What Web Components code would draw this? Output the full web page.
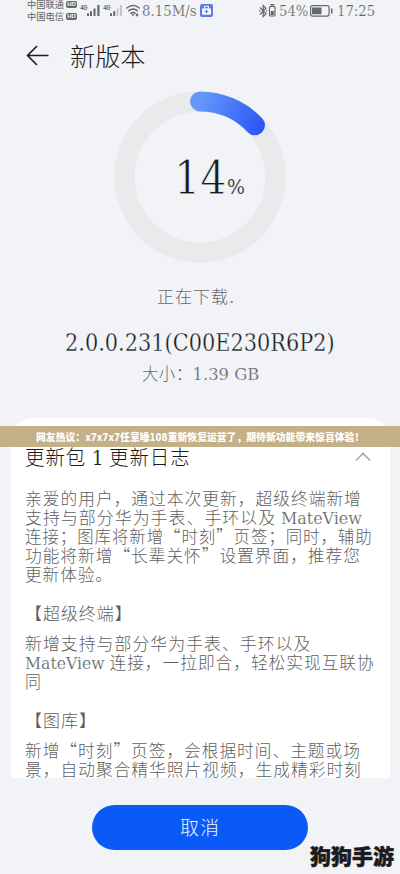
<!DOCTYPE html>
<html lang="zh-CN">
<head>
<meta charset="utf-8">
<title>新版本</title>
<style>
html,body{margin:0;padding:0;background:#f2f3f6}
body{width:400px;height:874px;overflow:hidden;font-family:"Noto Sans CJK SC",sans-serif;font-weight:300;color:#191a1c}
</style>
</head>
<body>
<update-page></update-page>
<script>
const define = (name, html, ready) => {
  const t = document.createElement('template');
  t.innerHTML = html;
  customElements.define(name, class extends HTMLElement {
    connectedCallback() {
      if (this.shadowRoot) return;
      this.attachShadow({mode: 'open'}).append(t.content.cloneNode(true));
      if (ready) ready.call(this);
    }
  });
};

// Latin letters and digits in a slab face, thinned by an outline in the surface colour.
define('latin-text', `<style>
:host{display:inline;font-family:"DejaVu Serif",serif;font-size:var(--latin,1em);line-height:0;letter-spacing:0;-webkit-text-stroke:var(--thin,.2px) var(--surface,#f2f3f6)}
</style><slot></slot>`);

// One line of text, set to the width given in "w".
// Measured once all nested elements have their own styles.
define('fit-line', `<style>
:host{display:block;flex:none;white-space:pre}
span{display:inline-block;transform-origin:0 50%}
</style><span><slot></slot></span>`, function () {
  const w = +this.getAttribute('w');
  const s = this.shadowRoot.querySelector('span');
  this.style.width = w + 'px';
  queueMicrotask(() => {
    s.style.transform = `scaleX(${w / s.offsetWidth})`;
  });
});

define('status-bar', `<style>
:host{display:flex;height:24px;color:#626366;align-items:flex-start;box-sizing:border-box;padding-left:27px}
.ops{display:grid;grid-template-rows:12px 12px;font-size:9.5px;font-weight:400;line-height:12px;margin-top:-2px;width:51px}
.row{display:flex;align-items:center;gap:2px}
.hd{font:700 6px/7px "Liberation Sans",sans-serif;background:#66676a;color:#f2f3f6;border-radius:2px;width:11px;height:7px;text-align:center}
svg{display:block;flex:none}
.speed,.num{font-size:15px;line-height:20px;height:22px}
</style>
<div class="ops"><div class="row"><fit-line w="37">中国联通</fit-line><span class="hd">HD</span></div><div class="row"><fit-line w="37">中国电信</fit-line><span class="hd">HD</span></div></div>
<svg width="64" height="22" viewBox="78 0 64 22">
<g fill="#66676a"><path d="M87 13.3h2V16h-2zM90 11.2h2V16h-2zM93.5 8.5h2V16h-2zM97.300 5h2.200v11h-2.200z"/><path d="M110 13.300h2V16h-2z"/><path d="M113.200 11.200h2V16h-2z"/><path fill="#c4c5c8" d="M116.500 8.500h2V16h-2zM119.900 5h2.200v11h-2.200z"/></g>
<g font-family="Liberation Sans" font-weight="700" font-size="6.500" fill="#66676a"><text x="80.300" y="9.800">4</text><text x="83.500" y="9.800" textLength="4" lengthAdjust="spacingAndGlyphs">G</text><text x="103.300" y="9.800">4</text><text x="106.500" y="9.800" textLength="4" lengthAdjust="spacingAndGlyphs">G</text></g>
<g fill="none" stroke="#66676a" stroke-width="1.500" stroke-linecap="round"><path d="M126.800 8q6.300-5 12.500 0M128.800 10.700q4.300-3.400 8.500 0M130.900 13.300q2.100-1.600 4.200 0"/></g><path fill="#66676a" d="M131.500 14.200h3L133 16.500zM135.500 15l1.500-2 1.500 2-1.500 1.800z"/>
</svg>
<fit-line class="speed" w="55"><latin-text>8.15M/s</latin-text></fit-line>
<svg width="17" height="22" viewBox="197 0 17 22"><rect x="200" y="4" width="13" height="13" rx="2" fill="#5a7bea"/><rect x="202" y="8.300" width="9" height="6.500" rx="1.300" fill="#f7f9ff"/><path d="M204.500 8V6.300h4V8" fill="none" stroke="#f7f9ff"/><path d="M206.500 9.700v3.600M204.700 11.500h3.600" stroke="#5a7bea" stroke-width="1.100"/></svg>
<svg style="margin-left:44px" width="21" height="22" viewBox="258 0 21 22"><g fill="none" stroke="#66676a" stroke-width="1.200"><path d="M260 7.500l6 6.300-2.800 2.700v-11l2.800 2.700-6 6.300"/><rect x="269.500" y="6.500" width="5.500" height="9.500" rx="1"/></g><path fill="#66676a" d="M270.300 4h4v1.500h-4zM270.800 11h3v4h-3zM259 10.300h1.300v1.300H259zM266 10.300h1.300v1.300H266z"/></svg>
<fit-line class="num" w="29"><latin-text>54%</latin-text></fit-line>
<svg width="29" height="22" viewBox="308 0 29 22"><rect x="310.600" y="5.600" width="18.500" height="10.500" rx="2" fill="none" stroke="#66676a" stroke-width="1.200"/><path fill="#66676a" d="M312 7.500h9.500v6.700H312zM331 8.500h1.500v5H331z"/></svg>
<fit-line class="num" w="38"><latin-text>17:25</latin-text></fit-line>`);

define('page-header', `<style>
:host{display:flex;align-items:center;height:36px;padding:14px 0 0 26px}
svg{display:block}
fit-line{font-size:24.500px;line-height:36px;margin-left:20px}
</style><svg width="24" height="24" viewBox="0 0 24 24"><path d="M22.500 11.500H1.500M11 2L1.500 11.500L11 21" fill="none" stroke="#191a1c" stroke-width="1.600"/></svg><fit-line w="76"><slot></slot></fit-line>`);

define('progress-ring', `<style>
:host{display:grid;width:172px;height:172px;margin:17px auto 0}
svg,.v{grid-area:1/1}
.v{display:flex;align-items:baseline;margin:55px 0 0 60px}
.n{font-size:46px;line-height:56px;--thin:.9px}.p{font-size:20px;--thin:.2px}
</style><svg width="172" height="172" viewBox="0 0 172 172"><defs><linearGradient id="g" gradientUnits="userSpaceOnUse" x1="76" y1="10" x2="148" y2="44"><stop offset=".1" stop-color="#6698fb"/><stop offset="1" stop-color="#2853f5"/></linearGradient></defs><circle cx="86" cy="86" r="75.500" fill="none" stroke="#e9eaec" stroke-width="20.500"/><path d="M86 10.500A75.500 75.500 0 0 1 141 34.300" fill="none" stroke="url(#g)" stroke-width="20" stroke-linecap="round"/></svg>
<div class="v"><fit-line class="n" w="53"><latin-text>14</latin-text></fit-line><fit-line class="p" w="18"><latin-text>%</latin-text></fit-line></div>`);

define('download-info', `<style>
:host{display:flex;flex-direction:column;align-items:center;color:#68696c}
.s{font-size:17px;line-height:24px;height:24px;margin:21px 0 0 -9px;letter-spacing:1px}
.v{font-size:24.500px;line-height:29px;height:32px;margin-top:18px;color:#18191c;--thin:.35px}
.z{font-size:17.500px;line-height:24px;height:24px;margin-top:3px;letter-spacing:.5px}
</style><fit-line class="s" w="77">正在下载<latin-text>.</latin-text></fit-line><fit-line class="v" w="270"><latin-text>2.0.0.231(C00E230R6P2)</latin-text></fit-line><fit-line class="z" w="117">大小：<latin-text>1.39 GB</latin-text></fit-line>`);

define('promo-banner', `<style>
:host{display:flex;justify-content:center;align-items:center;position:absolute;left:0;right:0;top:8px;height:21px;background:#bfa97fee;color:#fff;font:800 10.200px/21px "Noto Sans CJK SC",sans-serif}
b{font:700 10px/0 "DejaVu Sans Condensed","DejaVu Sans",sans-serif}
</style><fit-line w="328">网友热议：<b>x7x7x7</b>任意噪<b>108</b>重新恢复运营了，期待新功能带来惊喜体验！</fit-line>`);

define('change-log', `<style>
:host{display:block;position:relative;height:360px;margin-top:33px;--surface:#fff}
.card{box-sizing:border-box;height:360px;margin:0 10.500px;background:#fff;border-radius:22px 22px 0 0;padding:25px 0 0 14.500px;overflow:hidden}
.head{display:flex;justify-content:space-between;align-items:center;height:28px;padding-right:19px}
.head fit-line{font-size:20px;letter-spacing:1px;line-height:28px;height:28px}
</style><div class="card"><div class="head"><fit-line w="166">更新包 <latin-text>1</latin-text> 更新日志</fit-line><svg width="16" height="12" viewBox="0 0 16 12"><path d="M1 9.500L8 2.500l7 7" fill="none" stroke="#a5a6a8" stroke-width="1.600"/></svg></div><slot></slot></div><slot name="over"></slot>`);

define('log-block', `<style>
:host{display:flex;flex-direction:column;font-size:16.800px;line-height:19px;letter-spacing:1px;color:#5e5f61;--surface:#fff;--latin:.94em}
::slotted(fit-line){height:19px}
</style><slot></slot>`);

define('action-bar', `<style>
:host{display:grid;grid-template-columns:92px 216px 1fr;padding-top:27px;position:relative}
button{grid-column:2;height:45px;border:0;border-radius:23px;background:#0a5af8;color:#f1f6ff;font:300 19px/43px "Noto Sans CJK SC",sans-serif;letter-spacing:1px;padding:0;display:flex;justify-content:center;align-items:flex-start}
.mark{position:absolute;left:310px;top:61px;font:900 21px/32px "Noto Sans CJK SC",sans-serif;color:#1b1b1c;-webkit-text-stroke:.5px #1b1b1c}
</style><button><fit-line w="40">取消</fit-line></button><fit-line class="mark" w="84">狗狗手游</fit-line>`);

define('update-page', `<style>
:host{display:block;width:400px;height:874px;overflow:hidden;background:#f2f3f6}
</style><status-bar></status-bar><page-header>新版本</page-header><progress-ring></progress-ring><download-info></download-info>
<change-log>
<log-block style="margin-top:18px"><fit-line w="337">亲爱的用户，通过本次更新，超级终端新增</fit-line><fit-line w="337">支持与部分华为手表、手环以及 <latin-text>MateView</latin-text></fit-line><fit-line w="348">连接；图库将新增“时刻”页签；同时，辅助</fit-line><fit-line w="336">功能将新增“长辈关怀”设置界面，推荐您</fit-line><fit-line w="88">更新体验。</fit-line></log-block>
<log-block style="margin-top:20px"><fit-line w="108">【超级终端】</fit-line></log-block>
<log-block style="margin-top:11px"><fit-line w="287">新增支持与部分华为手表、手环以及</fit-line><fit-line w="350"><latin-text>MateView</latin-text> 连接，一拉即合，轻松实现互联协</fit-line><fit-line w="17">同</fit-line></log-block>
<log-block style="margin-top:20px"><fit-line w="72">【图库】</fit-line></log-block>
<log-block style="margin-top:11px"><fit-line w="336">新增“时刻”页签，会根据时间、主题或场</fit-line><fit-line w="337">景，自动聚合精华照片视频，生成精彩时刻</fit-line></log-block>
<promo-banner slot="over"></promo-banner>
</change-log>
<action-bar></action-bar>`);
</script>
</body>
</html>
